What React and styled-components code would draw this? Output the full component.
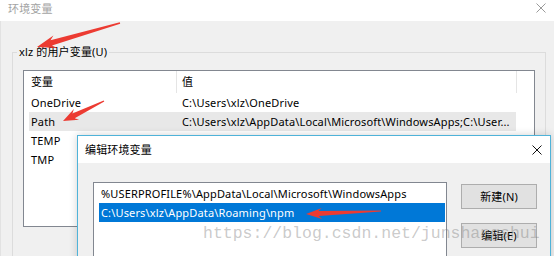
import React from "react";
import styled, { createGlobalStyle } from "styled-components";

const UI = `"Noto Sans", "Noto Sans CJK SC", sans-serif`;
const TXT = `11px/16px ${UI}`;

const Global = createGlobalStyle`
  html, body { margin: 0; padding: 0; background: #f0f0f0; }
  body { width: 554px; height: 256px; overflow: hidden; font-family: ${UI}; }
  * { box-sizing: border-box; }
`;

const Desktop = styled.div`
  position: relative;
  width: 554px;
  height: 256px;
  overflow: hidden;
  background: #f0f0f0;
`;

const Window = styled.div`
  display: flex;
  flex-direction: column;
  width: 100%;
  height: 100%;
`;

const TitleBar = styled.div`
  flex: none;
  height: ${(p) => p.$h}px;
  background: #fff;
  display: flex;
  align-items: ${(p) => (p.$top ? "flex-start" : "center")};
  justify-content: space-between;
  padding: ${(p) => (p.$top ? "1px" : "0")} ${(p) => p.$pr}px 0 ${(p) => p.$pl}px;
`;

const Title = styled.span`
  font: ${TXT};
  letter-spacing: 0.15px;
  color: ${(p) => (p.$inactive ? "#a3a3a3" : "#000")};
`;

const CloseBox = styled.span`
  display: flex;
  width: 10px;
  height: 10px;
  margin-top: ${(p) => (p.$top ? "2px" : "0")};
`;

const Close = ({ color, top }) => (
  <CloseBox $top={top}>
    <svg width="10" height="10" viewBox="0 0 10 10">
      <path d="M0.5 0.5 L9.5 9.5 M9.5 0.5 L0.5 9.5" stroke={color} strokeWidth="1" fill="none" />
    </svg>
  </CloseBox>
);

const Body = styled.div`
  flex: 1;
  background: #f0f0f0;
  padding: 23px 8px 0 12px;
  border-left: 1px solid #e2e2e2;
`;

const Group = styled.fieldset`
  margin: 0 0 0 -1px;
  width: 534px;
  height: 300px;
  border: 1px solid #dcdcdc;
  padding: 10px 10px 0 10px;
  min-width: 0;
`;

const GroupLabel = styled.legend`
  font: ${TXT};
  letter-spacing: 0.15px;
  color: #000;
  padding: 0 2px;
  margin-left: -6px;
`;

const ListView = styled.div`
  width: 512px;
  height: 157px;
  background: #fff;
  border: 1px solid #828790;
  display: flex;
  flex-direction: column;
`;

const Header = styled.div`
  display: flex;
  height: 22px;
  flex: none;
`;

const HeadCell = styled.div`
  width: ${(p) => p.$w}px;
  flex: none;
  padding-left: ${(p) => p.$pl}px;
  display: flex;
  align-items: center;
  font: ${TXT};
  color: #000;
  border-right: ${(p) => (p.$sep ? "1px solid #e5e5e5" : "none")};
`;

const Row = styled.div`
  display: flex;
  height: 19px;
  width: 487px;
  margin-left: 5px;
  align-items: center;
  background: ${(p) => (p.$sel ? "#e8e8e8" : "transparent")};
`;

const Cell = styled.div`
  width: ${(p) => p.$w}px;
  flex: none;
  padding-left: ${(p) => p.$pl}px;
  font: ${TXT};
  letter-spacing: 0.15px;
  color: #000;
  white-space: nowrap;
  overflow: hidden;
`;

const Dialog = styled.div`
  position: absolute;
  left: 77px;
  top: 135px;
  width: 474px;
  height: 160px;
  border: 1px solid #4fb3d9;
  background: #f0f0f0;
  display: flex;
  flex-direction: column;
  box-shadow: 0 0 8px rgba(0, 0, 0, 0.18);
`;

const DialogBody = styled.div`
  flex: 1;
  display: flex;
  gap: 14px;
  padding: 19px 13px 0 15px;
`;

const PathList = styled.div`
  width: 354px;
  height: 120px;
  flex: none;
  background: #fff;
  border: 1px solid #828790;
  padding: 1px 1px 0 5px;
  display: flex;
  flex-direction: column;
`;

const PathItem = styled.div`
  height: 19px;
  display: flex;
  align-items: center;
  padding-left: 2px;
  font: ${TXT};
  letter-spacing: 0.15px;
  white-space: nowrap;
  overflow: hidden;
  color: ${(p) => (p.$sel ? "#fff" : "#000")};
  background: ${(p) => (p.$sel ? "#0078d7" : "transparent")};
`;

const Buttons = styled.div`
  display: flex;
  flex-direction: column;
  gap: 14px;
  padding-top: 2px;
`;

const Button = styled.div`
  width: 76px;
  height: 25px;
  display: flex;
  align-items: center;
  justify-content: center;
  background: #e1e1e1;
  border: 1px solid #adadad;
  font: ${TXT};
  letter-spacing: 0.15px;
  color: #000;
`;

const Watermark = styled.div`
  position: absolute;
  z-index: 2;
  left: 203px;
  top: 224px;
  font: 16.5px/20px "Liberation Mono", monospace;
  color: rgba(120, 120, 120, 0.4);
  white-space: nowrap;
  pointer-events: none;
`;

const Overlay = styled.svg`
  position: absolute;
  z-index: 3;
  left: 0;
  top: 0;
  pointer-events: none;
`;

function arrowPoints(tx, ty, hx, hy, headLen, headHalf, neckHalf, tailHalf) {
  const dx = hx - tx;
  const dy = hy - ty;
  const L = Math.hypot(dx, dy);
  const ux = dx / L;
  const uy = dy / L;
  const nx = -uy;
  const ny = ux;
  const bx = hx - ux * headLen;
  const by = hy - uy * headLen;
  const nkx = bx + ux * headLen * 0.22;
  const nky = by + uy * headLen * 0.22;
  const pts = [
    [hx, hy],
    [bx + nx * headHalf, by + ny * headHalf],
    [nkx + nx * neckHalf, nky + ny * neckHalf],
    [tx + nx * tailHalf, ty + ny * tailHalf],
    [tx - nx * tailHalf, ty - ny * tailHalf],
    [nkx - nx * neckHalf, nky - ny * neckHalf],
    [bx - nx * headHalf, by - ny * headHalf],
  ];
  return pts.map((p) => p.map((v) => v.toFixed(1)).join(",")).join(" ");
}

const arrows = [
  [120, 23, 37, 47, 19, 6.5, 2.8, 0.7],
  [104, 101, 63, 121, 15, 6, 2.6, 0.7],
  [381, 211, 306, 214, 16, 5.5, 2.4, 0.6],
];

const userVars = [
  ["OneDrive", "C:\\Users\\xlz\\OneDrive"],
  ["Path", "C:\\Users\\xlz\\AppData\\Local\\Microsoft\\WindowsApps;C:\\User..."],
  ["TEMP", ""],
  ["TMP", ""],
];

export default function App() {
  return (
    <>
      <Global />
      <Desktop>
        <Window>
          <TitleBar $h={21} $pl={8} $pr={8} $top>
            <Title $inactive>环境变量</Title>
            <Close color="#9a9a9a" top />
          </TitleBar>
          <Body>
            <Group>
              <GroupLabel>xlz 的用户变量(U)</GroupLabel>
              <ListView>
                <Header>
                  <HeadCell $w={153} $pl={7} $sep>变量</HeadCell>
                  <HeadCell $w={340} $pl={5} $sep>值</HeadCell>
                </Header>
                {userVars.map(([k, v]) => (
                  <Row key={k} $sel={k === "Path"}>
                    <Cell $w={147} $pl={2}>{k}</Cell>
                    <Cell $w={340} $pl={6}>{v}</Cell>
                  </Row>
                ))}
              </ListView>
            </Group>
          </Body>
        </Window>

        <Dialog>
          <TitleBar $h={27} $pl={7} $pr={8}>
            <Title>编辑环境变量</Title>
            <Close color="#111" />
          </TitleBar>
          <DialogBody>
            <PathList>
              <PathItem>%USERPROFILE%\AppData\Local\Microsoft\WindowsApps</PathItem>
              <PathItem $sel>C:\Users\xlz\AppData\Roaming\npm</PathItem>
            </PathList>
            <Buttons>
              <Button>新建(N)</Button>
              <Button>编辑(E)</Button>
            </Buttons>
          </DialogBody>
        </Dialog>

        <Watermark>https://blog.csdn.net/junshangshui</Watermark>

        <Overlay width="554" height="256" viewBox="0 0 554 256">
          {arrows.map((a, i) => (
            <polygon key={i} points={arrowPoints(...a)} fill="#ec3b32" />
          ))}
        </Overlay>
      </Desktop>
    </>
  );
}
